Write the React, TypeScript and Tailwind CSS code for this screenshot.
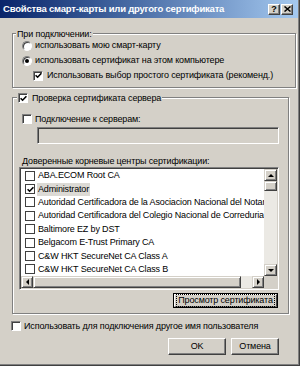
import React from "react";

const font = { fontFamily: '"Liberation Sans", Arial, sans-serif' };

function Check({ checked, flat }: { checked?: boolean; flat?: boolean }) {
  return (
    <span
      className={
        flat
          ? "flex h-[10px] w-[10px] shrink-0 items-center justify-center border border-[#404040] bg-white"
          : "flex h-[10px] w-[10px] shrink-0 items-center justify-center border border-t-[#808080] border-l-[#808080] border-r-white border-b-white bg-white shadow-[inset_1px_1px_0_#404040]"
      }
    >
      {checked && (
        <svg width="7" height="7" viewBox="0 0 7 7">
          <path d="M0.6 3.2 L2.6 5.2 L6.4 1.2" stroke="#000" strokeWidth="1.6" fill="none" />
        </svg>
      )}
    </span>
  );
}

function Radio({ checked }: { checked?: boolean }) {
  return (
    <span className="flex h-[10px] w-[10px] shrink-0 items-center justify-center rounded-full border border-t-[#808080] border-l-[#808080] border-r-white border-b-white bg-white shadow-[inset_1px_1px_0_#404040]">
      {checked && <span className="h-[4px] w-[4px] rounded-full bg-black" />}
    </span>
  );
}

function Arrow({ dir }: { dir: "up" | "down" | "left" | "right" }) {
  const pts =
    dir === "up"
      ? "1,4 4,1 7,4"
      : dir === "down"
      ? "1,1 4,4 7,1"
      : dir === "left"
      ? "4,1 1,4 4,7"
      : "1,1 4,4 1,7";
  const w = dir === "up" || dir === "down" ? 8 : 5;
  const h = dir === "up" || dir === "down" ? 5 : 8;
  return (
    <svg width={w} height={h} viewBox={`0 0 ${w} ${h}`}>
      <polygon points={pts} fill="#000" />
    </svg>
  );
}

function SbBtn({ dir, className }: { dir: "up" | "down" | "left" | "right"; className: string }) {
  return (
    <div
      className={
        "flex shrink-0 items-center justify-center border border-t-[#d4d0c8] border-l-[#d4d0c8] border-r-[#404040] border-b-[#404040] bg-[#d4d0c8] shadow-[inset_1px_1px_0_#fff,inset_-1px_-1px_0_#808080] " +
        className
      }
    >
      <Arrow dir={dir} />
    </div>
  );
}

const items: { text: string; checked?: boolean; selected?: boolean }[] = [
  { text: "ABA.ECOM Root CA" },
  { text: "Administrator", checked: true, selected: true },
  { text: "Autoridad Certificadora de la Asociacion Nacional del Notariado Mexicano" },
  { text: "Autoridad Certificadora del Colegio Nacional de Correduria Publica Mexicana" },
  { text: "Baltimore EZ by DST" },
  { text: "Belgacom E-Trust Primary CA" },
  { text: "C&W HKT SecureNet CA Class A" },
  { text: "C&W HKT SecureNet CA Class B" },
];

const btn =
  "flex items-center justify-center border border-t-white border-l-white border-r-[#404040] border-b-[#404040] bg-[#d4d0c8] shadow-[inset_-1px_-1px_0_#808080]";

export default function App() {
  return (
    <div
      className="relative h-[366px] w-[300px] overflow-hidden bg-[#d4d0c8] text-[9px] leading-none tracking-[-0.15px] text-black"
      style={font}
    >
      {/* title bar */}
      <div className="flex h-[18px] items-center bg-linear-to-r from-[#0a246a] to-[#a6caf0] pl-[3px] pr-[7px]">
        <span className="flex-1 whitespace-nowrap text-[9.5px] font-bold tracking-[-0.2px] text-white">
          Свойства смарт-карты или другого сертификата
        </span>
        <div className={btn + " h-[11px] w-[12px] text-[9px] font-bold"}>?</div>
        <div className={btn + " ml-[1px] h-[11px] w-[12px]"}>
          <svg width="7" height="6" viewBox="0 0 7 6">
            <path d="M0.5 0.5 L6.5 5.5 M6.5 0.5 L0.5 5.5" stroke="#000" strokeWidth="1.5" />
          </svg>
        </div>
      </div>

      <div className="flex flex-col pl-[12px]">
        {/* group 1 */}
        <div className="relative mt-[15px] h-[55px] w-[284px] border border-[#808080] shadow-[1px_1px_0_#fff,inset_1px_1px_0_#fff]">
          <span className="absolute left-[3px] top-[-6px] bg-[#d4d0c8] px-[1px] leading-[12px]">
            При подключении:
          </span>
          <div className="flex flex-col pt-[4px]">
            <div className="flex h-[15px] items-center gap-[3px] pl-[9px]">
              <Radio />
              <span>использовать мою смарт-карту</span>
            </div>
            <div className="flex h-[15px] items-center gap-[3px] pl-[9px]">
              <Radio checked />
              <span>использовать сертификат на этом компьютере</span>
            </div>
            <div className="flex h-[15px] items-center gap-[4px] pl-[20px]">
              <Check checked />
              <span>Использовать выбор простого сертификата (рекоменд.)</span>
            </div>
          </div>
        </div>

        {/* group 2 */}
        <div className="relative mt-[9px] flex h-[217px] w-[277px] flex-col border border-[#808080] shadow-[1px_1px_0_#fff,inset_1px_1px_0_#fff]">
          <div className="absolute left-[4px] top-[-6px] flex h-[12px] items-center gap-[4px] bg-[#d4d0c8] px-[1px]">
            <Check checked />
            <span>Проверка сертификата сервера</span>
          </div>
          <div className="mt-[14px] flex h-[14px] items-center gap-[3px] pl-[9px]">
            <Check />
            <span>Подключение к серверам:</span>
          </div>
          <div className="ml-[24px] mt-[1px] h-[17px] w-[242px] border border-t-[#808080] border-l-[#808080] border-r-white border-b-white bg-[#d4d0c8] shadow-[inset_1px_1px_0_#404040]" />
          <div className="ml-[9px] mt-[11px] flex h-[12px] items-center">
            Доверенные корневые центры сертификации:
          </div>
          {/* list */}
          <div className="ml-[6px] flex h-[123px] w-[260px] flex-col border border-t-[#808080] border-l-[#808080] border-r-white border-b-white bg-white p-[1px] shadow-[inset_1px_1px_0_#404040,inset_-1px_-1px_0_#d4d0c8]">
            <div className="flex min-h-0 flex-1">
              <div className="flex min-w-0 flex-1 flex-col overflow-hidden pl-[4px]">
                {items.map((it) => (
                  <div key={it.text} className="flex h-[13.4px] shrink-0 items-center gap-[2px] whitespace-nowrap">
                    <Check flat checked={it.checked} />
                    <span className={it.selected ? "bg-[#dcdad5] px-[1px] py-[2px]" : "px-[1px] py-[2px]"}>
                      {it.text}
                    </span>
                  </div>
                ))}
              </div>
              <div className="flex w-[13px] shrink-0 flex-col bg-[#ebe9e4]">
                <SbBtn dir="up" className="h-[12px] w-[13px]" />
                <div className="h-[10px] w-[13px] border border-t-[#d4d0c8] border-l-[#d4d0c8] border-r-[#404040] border-b-[#404040] bg-[#d4d0c8] shadow-[inset_1px_1px_0_#fff,inset_-1px_-1px_0_#808080]" />
                <div className="flex-1" />
                <SbBtn dir="down" className="h-[12px] w-[13px]" />
              </div>
            </div>
            <div className="flex h-[12px] shrink-0 bg-[#ebe9e4]">
              <SbBtn dir="left" className="h-[12px] w-[12px]" />
              <div className="h-[12px] w-[208px] border border-t-[#d4d0c8] border-l-[#d4d0c8] border-r-[#404040] border-b-[#404040] bg-[#d4d0c8] shadow-[inset_1px_1px_0_#fff,inset_-1px_-1px_0_#808080]" />
              <div className="flex-1" />
              <SbBtn dir="right" className="h-[12px] w-[12px]" />
              <div className="h-[12px] w-[13px] bg-[#d4d0c8]" />
            </div>
          </div>
          <div className="mt-[3px] flex justify-end pr-[10px]">
            <div className="flex h-[15px] w-[105px] items-center justify-center border border-black bg-[#d4d0c8]">
              <div className="flex h-full w-full items-center justify-center border border-t-white border-l-white border-r-[#404040] border-b-[#808080]">
                <span className="whitespace-nowrap border border-dotted border-black px-[1px] py-[1px] leading-[9px]">
                  Просмотр сертификата
                </span>
              </div>
            </div>
          </div>
        </div>

        {/* bottom checkbox */}
        <div className="ml-[-1px] mt-[5px] flex h-[14px] items-center gap-[3px]">
          <Check />
          <span>Использовать для подключения другое имя пользователя</span>
        </div>

        {/* buttons */}
        <div className="ml-[156px] mt-[5px] flex gap-[5px]">
          <div className={btn + " h-[17px] w-[58px]"}>OK</div>
          <div className={btn + " h-[17px] w-[48px]"}>Отмена</div>
        </div>
      </div>

      {/* window frame right/bottom */}
      <div className="pointer-events-none absolute inset-0 shadow-[inset_-1px_-1px_0_#404040,inset_-2px_-2px_0_#808080]" />
    </div>
  );
}
